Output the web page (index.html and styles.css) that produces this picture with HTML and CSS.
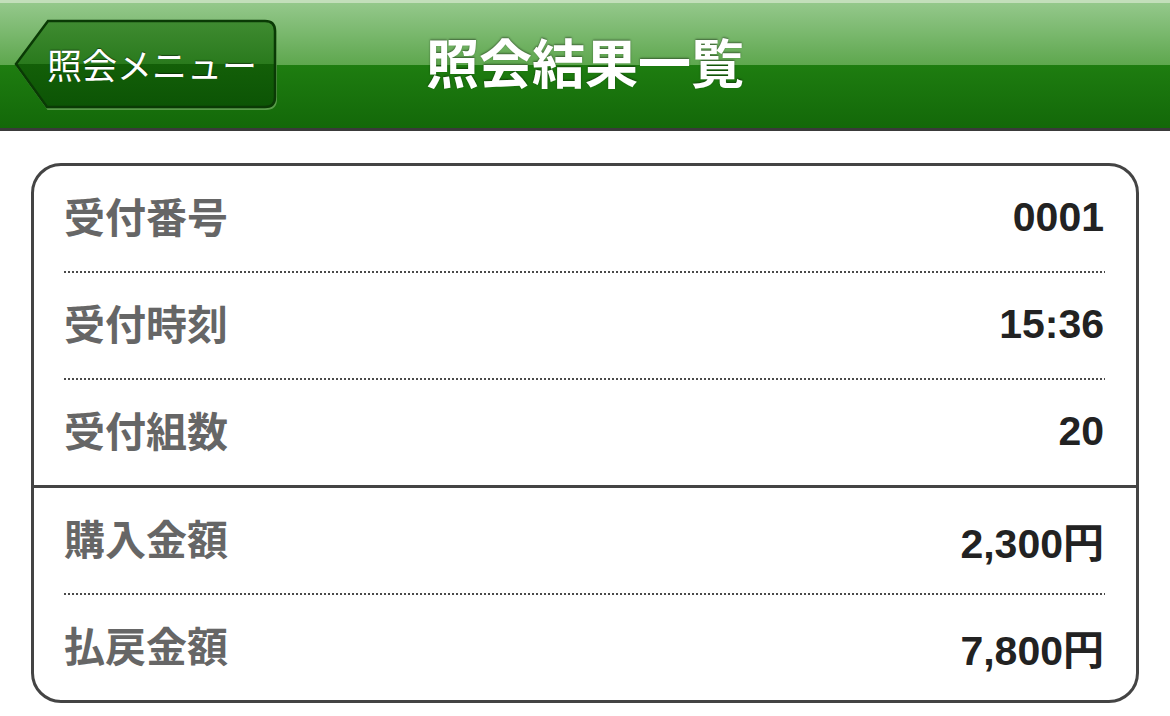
FILE: index.html
```html
<!DOCTYPE html>
<html lang="ja">
<head>
<meta charset="utf-8">
<title>照会結果一覧</title>
<link rel="stylesheet" href="styles.css">
</head>
<body>
<header class="topbar">
  <div class="left">
    <a class="back" href="#">
      <svg class="back-shape" viewBox="0 0 264 92" width="264" height="92" aria-hidden="true">
        <defs>
          <linearGradient id="bg" x1="0" y1="0" x2="0" y2="1">
            <stop offset="0" stop-color="#3f8b31"/>
            <stop offset="0.5" stop-color="#2a7a1d"/>
            <stop offset="0.5" stop-color="#135f08"/>
            <stop offset="1" stop-color="#0c5405"/>
          </linearGradient>
        </defs>
        <path d="M3 47 L35 4 L252 4 Q262 4 262 14 L262 80 Q262 90 252 90 L34 90 Z" fill="none" stroke="#6aa85a" stroke-width="2" opacity="0.8"/>
        <path d="M2 45 L34 2 L251 2 Q261 2 261 12 L261 78 Q261 88 251 88 L33 88 Z" fill="url(#bg)" stroke="#0a3a05" stroke-width="2.5"/>
      </svg>
      <span class="back-label">照会メニュー</span>
    </a>
  </div>
  <h1 class="title">照会結果一覧</h1>
  <div class="right"></div>
</header>

<main class="card">
  <section class="group">
    <div class="row dotted"><span class="label">受付番号</span><span class="value">0001</span></div>
    <div class="row dotted"><span class="label">受付時刻</span><span class="value">15:36</span></div>
    <div class="row"><span class="label">受付組数</span><span class="value">20</span></div>
  </section>
  <section class="group last">
    <div class="row dotted"><span class="label">購入金額</span><span class="value">2,300円</span></div>
    <div class="row"><span class="label">払戻金額</span><span class="value">7,800円</span></div>
  </section>
</main>
</body>
</html>
```

FILE: styles.css
```css
* { box-sizing: border-box; }

html, body {
  margin: 0;
  padding: 0;
  background: #ffffff;
}

body {
  font-family: "Liberation Sans", "Noto Sans CJK JP", sans-serif;
}

.topbar {
  height: 131px;
  display: grid;
  grid-template-columns: 1fr auto 1fr;
  align-items: center;
  background: linear-gradient(to bottom,
    #c3dfbb 0px, #c3dfbb 3px,
    #94c88b 3px, #5ea74e 65px,
    #1e7d10 65px, #136809 128px);
  border-bottom: 3px solid #3a3a3a;
}

.left {
  padding-left: 14px;
  padding-top: 2px;
}

.back {
  position: relative;
  display: flex;
  align-items: center;
  width: 264px;
  height: 92px;
  text-decoration: none;
}

.back-shape {
  position: absolute;
  left: 0;
  top: 0;
}

.back-label {
  position: relative;
  padding-left: 33px;
  padding-bottom: 4px;
  color: #ffffff;
  font-family: "Noto Sans CJK JP", sans-serif;
  font-size: 35px;
  font-weight: 400;
  text-shadow: 0 -1px 1px rgba(0, 0, 0, 0.45);
}

.title {
  margin: 0;
  padding-bottom: 6px;
  color: #ffffff;
  font-family: "Noto Sans CJK JP", sans-serif;
  font-size: 53px;
  font-weight: 700;
  line-height: 1;
  text-shadow: 0 -1px 2px rgba(0, 0, 0, 0.45);
}

.card {
  margin: 32px 31px 0 31px;
  border: 3px solid #444444;
  border-radius: 30px;
  overflow: hidden;
}

.group {
  border-bottom: 3px solid #444444;
}

.group.last {
  border-bottom: none;
}

.row {
  margin: 0 31px 0 30px;
  height: 105px;
  display: flex;
  align-items: center;
  justify-content: space-between;
}

.row.dotted {
  height: 107px;
  padding-bottom: 2px;
  background-image: repeating-linear-gradient(to right, #4a4a4a 0 2px, transparent 2px 4px);
  background-size: 100% 2px;
  background-position: left bottom;
  background-repeat: no-repeat;
}

.label {
  color: #666666;
  font-family: "Noto Sans CJK JP", sans-serif;
  font-size: 41px;
  font-weight: 700;
  padding-bottom: 8px;
}

.value {
  color: #222222;
  font-family: "Liberation Sans", "Noto Sans CJK JP", sans-serif;
  font-size: 41px;
  font-weight: 700;
  padding-right: 1px;
  padding-bottom: 2px;
}
```
